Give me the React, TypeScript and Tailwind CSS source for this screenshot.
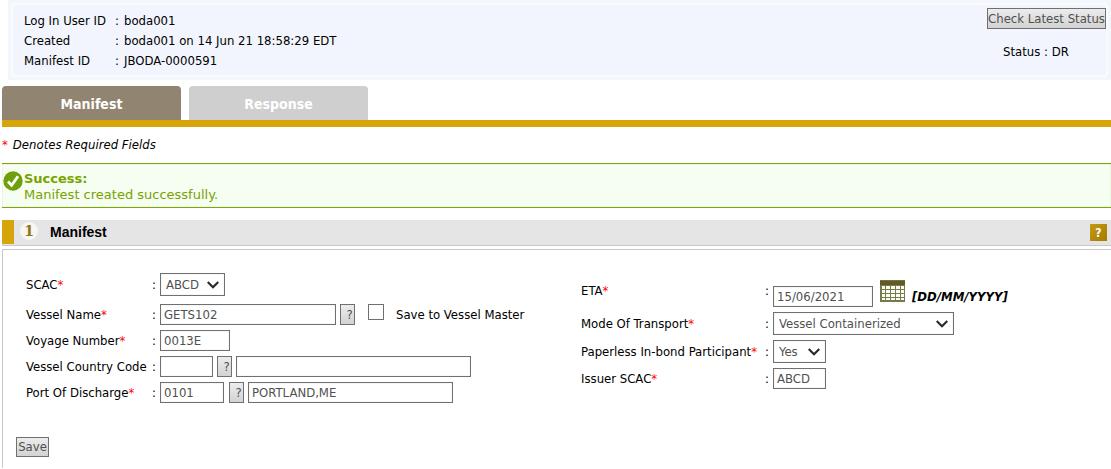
import { ReactNode } from 'react'

const border = 'border border-[#707070]'
const buttonLook = `${border} bg-linear-to-b from-[#ececec] to-[#d3d3d3] text-[#505050]`

interface FieldProps {
  id: string
  label: string
  required?: boolean
  className?: string
  labelWidth: string
  children: ReactNode
}

function Field({ id, label, required, className = 'items-center', labelWidth, children }: FieldProps) {
  return (
    <div className={`flex ${className}`}>
      <label htmlFor={id} className={`flex shrink-0 justify-between pr-1 leading-[21px] whitespace-nowrap ${labelWidth}`}>
        <span>
          {label}
          {required && <span className="text-[#f00]">*</span>}
        </span>
        <span>:</span>
      </label>
      {children}
    </div>
  )
}

interface TextInputProps {
  id: string
  value?: string
  label?: string
  className: string
}

function TextInput({ id, value = '', label, className }: TextInputProps) {
  return (
    <input
      id={id}
      type="text"
      aria-label={label}
      defaultValue={value}
      className={`h-[21px] bg-white px-[3px] text-[#505050] inset-shadow-[0_0_1px_#bbb] ${border} ${className}`}
    />
  )
}

function Select({ id, value, className }: { id: string; value: string; className: string }) {
  return (
    <div className={`relative ${className}`}>
      <select
        id={id}
        defaultValue={value}
        className={`h-[23px] w-full appearance-none bg-white pl-[5px] text-[#505050] inset-shadow-[0_0_1px_#bbb] ${border}`}
      >
        <option>{value}</option>
      </select>
      <svg
        viewBox="0 0 12 8"
        className="pointer-events-none absolute top-2 right-[6px] h-2 w-3"
        fill="none"
        stroke="#2a2a2a"
        strokeWidth="2.2"
      >
        <path d="M0.7 1 L6 6.2 L11.3 1" />
      </svg>
    </div>
  )
}

function LookupButton({ label, className }: { label: string; className: string }) {
  return (
    <button type="button" aria-label={label} className={`h-[21px] w-[15px] pl-[4px] ${buttonLook} ${className}`}>
      ?
    </button>
  )
}

function CalendarIcon() {
  return (
    <svg viewBox="0 0 25 22" className="h-[22px] w-[25px]">
      <path d="M0 0h25v22H0z" fill="#777b4c" />
      <path d="M0 0h25v5H0z" fill="#605b24" />
      <path d="M0 0h25v1H0z" fill="#77743a" />
      <path
        d="M2 6h3v3H2zM6 6h4v3H6zM11 6h4v3h-4zM16 6h4v3h-4zM21 6h3v3h-3zM2 10h3v3H2zM6 10h4v3H6zM11 10h4v3h-4zM16 10h4v3h-4zM21 10h3v3h-3zM2 14h3v3H2zM6 14h4v3H6zM11 14h4v3h-4zM16 14h4v3h-4zM21 14h3v3h-3zM2 18h3v2H2zM6 18h4v2H6zM11 18h4v2h-4zM16 18h4v2h-4zM21 18h3v2h-3z"
        fill="#fbfcf4"
      />
    </svg>
  )
}

function SuccessIcon() {
  return (
    <svg viewBox="0 0 20 20" className="size-5 shrink-0">
      <circle cx="10" cy="10" r="9.7" fill="#6f9f0c" />
      <path d="M5 10.5 L8.6 14.2 L15 5.2" fill="none" stroke="#fff" strokeWidth="2.8" />
    </svg>
  )
}

function Header() {
  const rows = [
    ['Log In User ID', 'boda001'],
    ['Created', 'boda001 on 14 Jun 21 18:58:29 EDT'],
    ['Manifest ID', 'JBODA-0000591'],
  ]

  return (
    <header className="ml-2 bg-[#f3f7fc] p-[3px]">
      <div className="flex justify-between rounded-sm border-2 border-[#f9fbfe] bg-[#f2f5fd] pt-[3px] pb-[1px] pl-[11px]">
        <dl className="py-[3px]">
          {rows.map(([label, value]) => (
            <div key={label} className="flex h-5 items-center">
              <dt className="flex w-[95px] justify-between">
                {label}
                <span>:</span>
              </dt>
              <dd className="pl-[5px]">{value}</dd>
            </div>
          ))}
        </dl>
        <div className="flex flex-col items-start">
          <button type="button" className={`h-[21px] w-[119px] whitespace-nowrap ${buttonLook}`}>
            Check Latest Status
          </button>
          <p className="mt-[13px] ml-4 leading-5">Status : DR</p>
        </div>
      </div>
    </header>
  )
}

function Tabs() {
  const tab = 'h-[34px] w-[179px] rounded-t-[4px] pt-[2px] text-sm font-bold text-white'
  return (
    <nav className="mt-[6px] ml-[2px] flex gap-2 border-b-[7px] border-[#d7a409]">
      <button type="button" className={`bg-[#918470] ${tab}`}>Manifest</button>
      <button type="button" className={`bg-[#cfcfcf] ${tab}`}>Response</button>
    </nav>
  )
}

function ManifestForm() {
  const left = 'w-[134px]'
  const right = 'w-[192px]'

  return (
    <form className="mt-[3px] border-t border-l border-[#c8c8c8] pt-[23px] pb-[11px]">
      <div className="grid grid-cols-2">
        <div className="flex flex-col gap-[5px] pl-[23px]">
          <Field id="scac" label="SCAC" required labelWidth={left} className="items-center pb-[3px]">
            <Select id="scac" value="ABCD" className="w-[65px]" />
          </Field>
          <Field id="vessel" label="Vessel Name" required labelWidth={left}>
            <TextInput id="vessel" value="GETS102" className="w-[176px]" />
            <LookupButton label="Find vessel" className="ml-1" />
            <input id="saveVessel" type="checkbox" className={`ml-[13px] size-4 appearance-none self-start bg-white checked:bg-[#505050] ${border}`} />
            <label htmlFor="saveVessel" className="ml-3 whitespace-nowrap">Save to Vessel Master</label>
          </Field>
          <Field id="voyage" label="Voyage Number" required labelWidth={left}>
            <TextInput id="voyage" value="0013E" className="w-[70px]" />
          </Field>
          <Field id="country" label="Vessel Country Code" labelWidth={left}>
            <TextInput id="country" className="w-[53px]" />
            <LookupButton label="Find country" className="mx-1" />
            <TextInput id="countryName" label="Vessel country name" className="w-[235px]" />
          </Field>
          <Field id="port" label="Port Of Discharge" required labelWidth={left}>
            <TextInput id="port" value="0101" className="w-16" />
            <LookupButton label="Find port" className="mr-1 ml-[5px]" />
            <TextInput id="portName" label="Port name" value="PORTLAND,ME" className="w-[205px]" />
          </Field>
        </div>
        <div className="flex flex-col gap-[5px] pt-[7px] pl-6">
          <Field id="eta" label="ETA" required labelWidth={right} className="items-start">
            <TextInput id="eta" value="15/06/2021" className="mt-[6px] w-[100px]" />
            <button type="button" aria-label="Pick a date" className="ml-[7px]">
              <CalendarIcon />
            </button>
            <span className="mt-[6px] ml-[7px] leading-[21px] font-bold italic">[DD/MM/YYYY]</span>
          </Field>
          <Field id="mode" label="Mode Of Transport" required labelWidth={right}>
            <Select id="mode" value="Vessel Containerized" className="w-[181px]" />
          </Field>
          <Field id="paperless" label="Paperless In-bond Participant" required labelWidth={right}>
            <Select id="paperless" value="Yes" className="w-[53px]" />
          </Field>
          <Field id="issuer" label="Issuer SCAC" required labelWidth={right}>
            <TextInput id="issuer" value="ABCD" className="w-[53px]" />
          </Field>
        </div>
      </div>
      <button type="button" className={`mt-[34px] ml-[13px] h-5 w-[33px] ${buttonLook}`}>
        Save
      </button>
    </form>
  )
}

export default function App() {
  return (
    <div className="bg-white font-['DejaVu_Sans_Condensed','DejaVu_Sans',sans-serif] text-[13px] leading-4 text-black">
      <Header />
      <Tabs />
      <main className="ml-[2px]">
        <p className="mt-[10px] flex gap-[5px] italic">
          <span className="text-[#f00] not-italic">*</span>
          Denotes Required Fields
        </p>
        <div
          role="status"
          className="mt-[10px] flex border-y border-[#7ba60e] bg-[#f6fdf1] pt-[7px] pb-1 pl-[1px] font-['DejaVu_Sans',sans-serif] text-[#78a300] inset-shadow-[0_0_1px_#9cbd4a]"
        >
          <SuccessIcon />
          <div className="pl-[1px]">
            <p className="font-bold">Success:</p>
            <p>Manifest created successfully.</p>
          </div>
        </div>
        <div className="mt-3 flex h-[26px] items-center border-b border-[#c8c8c8] bg-[#e5e5e5] pr-[4px]">
          <span className="h-6 w-3 self-start bg-[#d7a409]" />
          <span className="ml-[6px] flex size-[18px] items-center justify-center self-start mt-[2px] rounded-full bg-[#f6f6f2] font-['DejaVu_Serif',serif] text-sm font-bold text-[#8f7514]">
            1
          </span>
          <h2 className="ml-3 self-start font-['Liberation_Sans',sans-serif] text-sm leading-6 font-bold">Manifest</h2>
          <button type="button" aria-label="Help" className="ml-auto size-[17px] bg-linear-to-br from-[#c49a10] to-[#a77a05] text-xs font-bold text-white">
            ?
          </button>
        </div>
        <ManifestForm />
      </main>
    </div>
  )
}
